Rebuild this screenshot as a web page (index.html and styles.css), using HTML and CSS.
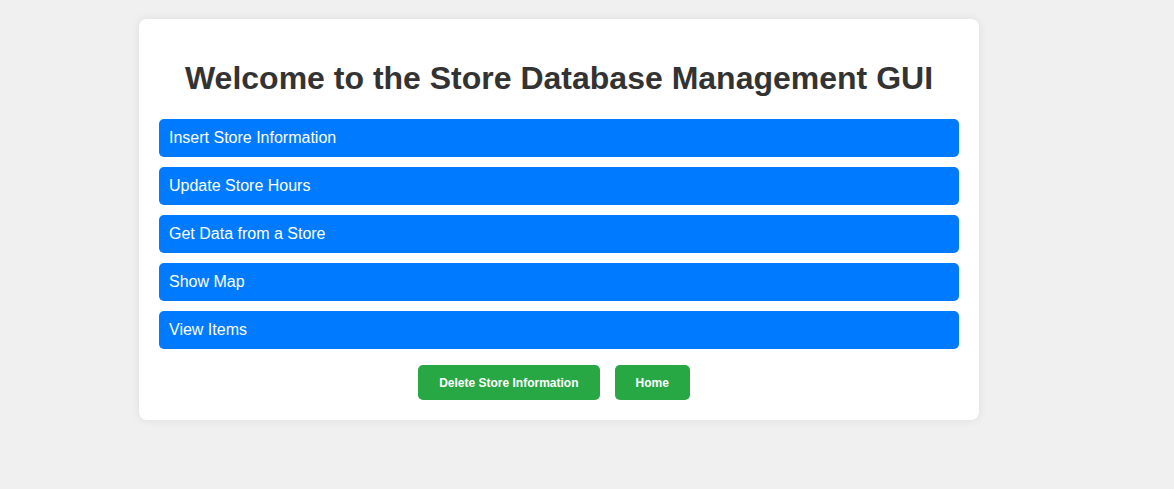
FILE: index.html
```html
<!DOCTYPE html>
<html>
<head>
<meta charset="utf-8">
<link rel="stylesheet" href="styles.css">
</head>
<body>
<div class="card">
  <h1 class="title">Welcome to the Store Database Management GUI</h1>
  <div class="menu">
    <button class="menu-btn">Insert Store Information</button>
    <button class="menu-btn">Update Store Hours</button>
    <button class="menu-btn">Get Data from a Store</button>
    <button class="menu-btn">Show Map</button>
    <button class="menu-btn">View Items</button>
  </div>
  <div class="actions">
    <button class="act-btn">Delete Store Information</button>
    <button class="act-btn">Home</button>
  </div>
</div>
</body>
</html>
```
FILE: styles.css
```css
html, body {
  margin: 0;
  padding: 0;
}
body {
  background: #f0f0f0;
  font-family: "Liberation Sans", Arial, sans-serif;
  height: 489px;
  padding-top: 19px;
  box-sizing: border-box;
}
.card {
  width: 800px;
  margin-left: 139px;
  padding: 20px;
  background: #fff;
  border-radius: 8px;
  box-shadow: 0 0 10px rgba(0, 0, 0, 0.08);
}
.title {
  margin: 21px 0 22px;
  font-size: 32px;
  line-height: 37px;
  font-weight: bold;
  color: #333;
  text-align: center;
}
.menu {
  display: flex;
  flex-direction: column;
  gap: 10px;
}
.menu-btn {
  display: block;
  height: 38px;
  padding: 0 10px;
  border: none;
  border-radius: 5px;
  background: #007bff;
  color: #fff;
  font-family: "Liberation Sans", Arial, sans-serif;
  font-size: 16px;
  text-align: left;
}
.actions {
  display: flex;
  justify-content: center;
  gap: 15px;
  margin-top: 16px;
  padding-right: 10px;
}
.act-btn {
  height: 35px;
  padding: 0 21px;
  border: none;
  border-radius: 5px;
  background: #28a745;
  color: #fff;
  font-family: "Liberation Sans", Arial, sans-serif;
  font-size: 12px;
  font-weight: bold;
}
```
